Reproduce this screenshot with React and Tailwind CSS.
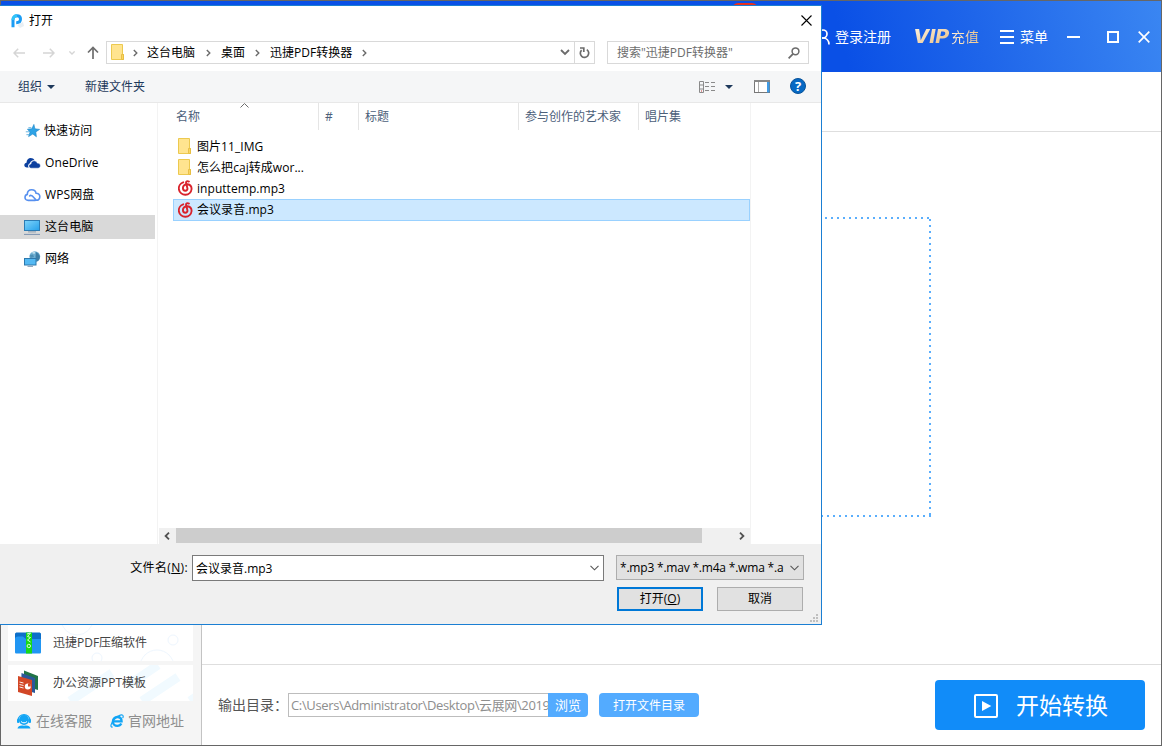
import React, { useState } from "react";

const FolderIcon = () => (
  <svg width="13" height="16" viewBox="0 0 13 16">
    <path d="M0.5 0.5H11.5V10L12.5 10.5V15.5H0.5Z" fill="#ffe48f" stroke="#ecc94f" />
    <path d="M10.5 15V10.5H12.5V15.5H10.5" fill="#fbd661" stroke="#e3b93c" strokeWidth="0.8" />
  </svg>
);

const MusicIcon = () => (
  <svg width="15" height="16" viewBox="0 0 15 16" fill="none" stroke="#d9232c" strokeLinecap="round">
    <path d="M5.2 2.3A6.4 6.4 0 1 0 13.6 9C13.6 6.3 11.9 4.5 9.5 4.2C6.8 4 4.9 5.8 4.9 8C4.9 9.6 6 10.7 7.3 10.7C8.9 10.7 9.7 9.4 9.4 8.2L8.1 3.1C7.8 1.5 9.3 0.6 10.9 1.6" strokeWidth="1.9" />
  </svg>
);

const StarIcon = () => (
  <svg width="16" height="16" viewBox="0 0 16 16">
    <path d="M9.9 1.4L10.9 5.8L15.6 6.4L11.8 8.9L12.4 13.8L8.8 11L4.6 13.6L6 9L3.4 6.2L7.8 5.8Z" fill="#2ea3e6" stroke="#1d86c8" strokeWidth="0.6" />
    <path d="M4.4 4.7H7.3M1.8 8.8H5.2M2.4 11.7H5" stroke="#5aaede" strokeWidth="0.9" />
  </svg>
);

const OneDriveIcon = () => (
  <svg width="17" height="16" viewBox="0 0 17 16">
    <path d="M3 12.6C1.2 12.6 0.3 11.4 0.3 10.1C0.3 8.8 1.3 7.9 2.5 7.7C2.5 4.8 4.6 3 6.7 3C8.4 3 9.8 3.9 10.5 5.3C8 5 6.3 6.5 6 8.2C4.4 8.5 3.5 10.8 4.7 12.6Z" fill="#0c409f" />
    <path d="M7.2 13.2C5.7 13.2 4.9 12.2 4.9 11.1C4.9 9.9 5.8 9 7 8.9C7.1 7 8.5 5.8 10.2 5.8C11.7 5.8 12.8 6.7 13.2 8.1C15 8 16.4 9.2 16.4 10.7C16.4 12.2 15.4 13.2 14 13.2Z" fill="#0c409f" stroke="#fff" strokeWidth="0.5" />
  </svg>
);

const WpsCloudIcon = () => (
  <svg width="17" height="16" viewBox="0 0 17 16" fill="none" stroke="#5790ef" strokeWidth="1.6" strokeLinecap="round">
    <path d="M11.2 13.4H4.2C2.2 13.4 1 12.1 1 10.4C1 8.8 2 7.7 3.3 7.4C3.3 4.4 5.2 2.7 7.7 2.7C10.1 2.7 11.8 4.2 12.1 6.3C14.2 6.4 15.8 7.8 15.8 9.8C15.8 11.8 14.4 13.4 12.4 13.3L8.6 9.2C7.7 8.2 6.3 8.2 5.6 9" />
  </svg>
);

const ComputerIcon = () => (
  <svg width="17" height="16" viewBox="0 0 17 16">
    <defs>
      <linearGradient id="screen" x1="0" y1="0" x2="1" y2="1">
        <stop offset="0" stopColor="#7fd4fb" />
        <stop offset="1" stopColor="#25a0ea" />
      </linearGradient>
    </defs>
    <rect x="0.5" y="1.5" width="15" height="10" fill="url(#screen)" stroke="#2c7cb4" />
    <path d="M4 12.9H12" stroke="#8b9cad" />
    <path d="M0 15.4H16" stroke="#7d93b0" />
  </svg>
);

const NetworkIcon = () => (
  <svg width="17" height="16" viewBox="0 0 17 16">
    <circle cx="10.8" cy="5.6" r="5.4" fill="#6fb0d3" />
    <path d="M12 1L14 2.5L15.8 5C16 8 15 9.6 12.8 10.6L11.5 6Z" fill="#3c7ea6" />
    <path d="M6 4L9 3.5L10 6L6.5 7Z" fill="#4c8fb5" />
    <path d="M7.5 1.8L11 0.8L10.5 3Z" fill="#cfe8f2" />
    <rect x="0.5" y="7.5" width="11.5" height="6.5" fill="#54b9f3" stroke="#2d78ad" />
    <path d="M3.5 15.3H9" stroke="#7895b0" />
  </svg>
);

const places = [
  { name: "快速访问", icon: StarIcon },
  { name: "OneDrive", icon: OneDriveIcon },
  { name: "WPS网盘", icon: WpsCloudIcon },
  { name: "这台电脑", icon: ComputerIcon },
  { name: "网络", icon: NetworkIcon },
];

const files = [
  { name: "图片11_IMG", icon: FolderIcon },
  { name: "怎么把caj转成wor...", icon: FolderIcon },
  { name: "inputtemp.mp3", icon: MusicIcon },
  { name: "会议录音.mp3", icon: MusicIcon },
];

const Chevron = () => (
  <svg width="5" height="8" viewBox="0 0 5 8" className="shrink-0">
    <path d="M0.8 1L3.8 4L0.8 7" fill="none" stroke="#6b6b6b" strokeWidth="1.4" />
  </svg>
);

function OpenDialog() {
  const [place, setPlace] = useState("这台电脑");
  const [selected, setSelected] = useState("会议录音.mp3");

  return (
    <div className="absolute left-0 top-[5px] w-[822px] h-[620px] flex flex-col bg-white border border-l-0 border-[#1b7fd3] text-xs text-black">
      {/* title bar */}
      <div className="h-[29px] flex items-center pl-[11px] pr-[9px] shrink-0">
        <svg width="13" height="14" viewBox="0 0 13 14">
          <path d="M6 11L12 8L13 12L9 14Z" fill="#e8eef3" />
          <path d="M2 13.3V5.8C2 3 3.8 1.8 6 1.8C8.3 1.8 9.5 3.1 9.5 5C9.5 7.4 8.2 8.7 5.2 8.7" fill="none" stroke="#1b9cf4" strokeWidth="3" />
          <path d="M2 6C2 3 3.8 1.8 6 1.8" fill="none" stroke="#31c4f8" strokeWidth="3" />
        </svg>
        <span className="ml-[5px]">打开</span>
        <svg className="ml-auto" width="11" height="11" viewBox="0 0 11 11">
          <path d="M0.5 0.5L10.5 10.5M10.5 0.5L0.5 10.5" stroke="#000" strokeWidth="1.1" />
        </svg>
      </div>

      {/* navigation */}
      <div className="h-9 pt-[6px] flex items-start shrink-0">
        <div className="h-[23px] w-[106px] flex items-center pl-[13px]">
          <svg width="12" height="10" viewBox="0 0 12 10" fill="none" stroke="#d5d5d5" strokeWidth="1.5">
            <path d="M12 5H1M5.2 0.8L1 5L5.2 9.2" />
          </svg>
          <svg className="ml-[18px]" width="12" height="10" viewBox="0 0 12 10" fill="none" stroke="#d5d5d5" strokeWidth="1.5">
            <path d="M0 5H11M6.8 0.8L11 5L6.8 9.2" />
          </svg>
          <svg className="ml-[14px]" width="6" height="4" viewBox="0 0 6 4" fill="none" stroke="#d5d5d5" strokeWidth="1.3">
            <path d="M0.4 0.4L3 3L5.6 0.4" />
          </svg>
          <svg className="ml-3" width="12" height="13" viewBox="0 0 12 13" fill="none" stroke="#6e6e6e" strokeWidth="1.7">
            <path d="M6 13V1.5M1 6.5L6 1.5L11 6.5" />
          </svg>
        </div>
        <div className="w-[489px] h-[23px] border border-[#d9d9d9] flex items-center">
          <span className="ml-1 pb-px shrink-0"><FolderIcon /></span>
          <div className="flex items-center gap-[10px] ml-[9px]">
            <Chevron />
            <span className="-ml-px mr-px">这台电脑</span>
            <Chevron />
            <span>桌面</span>
            <Chevron />
            <span>迅捷PDF转换器</span>
            <Chevron />
          </div>
          <svg className="ml-auto mr-1" width="10" height="7" viewBox="0 0 10 7" fill="none" stroke="#6b6b6b" strokeWidth="1.8">
            <path d="M1 1L5 5L9 1" />
          </svg>
          <div className="w-5 h-full border-l border-[#d9d9d9] flex items-center justify-center">
            <svg width="11" height="12" viewBox="0 0 11 12" fill="none" stroke="#6b6b6b" strokeWidth="1.7">
              <path d="M7.8 2.6A4.2 4.2 0 1 1 2.6 3.1" />
              <path d="M1 1H4.8V5" />
            </svg>
          </div>
        </div>
        <div className="ml-3 w-[202px] h-[23px] border border-[#d9d9d9] flex items-center pl-[9px] pr-2 text-[#6d6d6d]">
          <span>搜索"迅捷PDF转换器"</span>
          <svg className="ml-auto" width="12" height="12" viewBox="0 0 12 12" fill="none" stroke="#6b6b6b" strokeWidth="1.5">
            <circle cx="7.5" cy="4.3" r="3.4" />
            <path d="M5 6.8L0.6 11.3" strokeWidth="1.8" />
          </svg>
        </div>
      </div>

      {/* command bar */}
      <div className="h-8 bg-[#f5f6f7] border-b border-[#e8e8e8] flex items-center pl-[18px] text-[#1e395b] shrink-0">
        <span>组织</span>
        <svg className="ml-[5px]" width="8" height="4" viewBox="0 0 8 4"><path d="M0 0H8L4 4Z" fill="#1e395b" /></svg>
        <span className="ml-[30px]">新建文件夹</span>
        <svg className="ml-auto" width="16" height="12" viewBox="0 0 16 12" fill="none" stroke="#8a8a8a">
          <path d="M0.5 0.5H4.5V11.5H0.5ZM0.5 4H4.5M0.5 8H4.5M6 1.5H10M12 1.5H16M6 5.5H10M12 5.5H16M6 9.5H10M12 9.5H16" />
          <path d="M2 10H3" stroke="#c33" />
        </svg>
        <svg className="ml-[10px]" width="8" height="4" viewBox="0 0 8 4"><path d="M0 0H8L4 4Z" fill="#1e395b" /></svg>
        <svg className="ml-[21px]" width="16" height="13" viewBox="0 0 16 13">
          <rect x="0.5" y="0.5" width="15" height="12" fill="#fff" stroke="#777" />
          <path d="M0 1H16" stroke="#888" strokeWidth="2" />
          <path d="M4.5 2V12" stroke="#aaa" />
          <rect x="13" y="2" width="2.5" height="10.5" fill="#3f9be6" />
        </svg>
        <span className="ml-5 mr-[15px] mb-px size-4 rounded-full bg-[#0669c4] border border-[#09539a] text-white font-bold text-[13px] leading-none flex items-center justify-center">?</span>
      </div>

      {/* folder tree and file list */}
      <div className="flex h-[441px] shrink-0">
        <div className="w-[158px] pt-4 border-r border-[#f3f3f3] flex flex-col gap-2">
          {places.map(({ name, icon: Icon }) => (
            <div
              key={name}
              onClick={() => setPlace(name)}
              className={`h-6 w-[155px] pl-6 flex items-center gap-1 ${place === name ? "bg-[#d9d9d9]" : ""}`}
            >
              <Icon />
              <span className="tracking-[0.1px]">{name}</span>
            </div>
          ))}
        </div>

        <div className="w-[592px] pl-[1px] flex flex-col">
          <div className="h-[27px] flex text-[#4c607a] leading-[27px]">
            <div className="relative w-[160px] pl-[17px] border-r border-[#e5e5e5]">
              名称
              <svg className="absolute left-[81px] top-0" width="9" height="5" viewBox="0 0 9 5" fill="none" stroke="#6b6b6b">
                <path d="M0.5 4.5L4.5 0.5L8.5 4.5" />
              </svg>
            </div>
            <div className="w-10 pl-[6px] border-r border-[#e5e5e5]">#</div>
            <div className="w-[160px] pl-[6px] border-r border-[#e5e5e5]">标题</div>
            <div className="w-[120px] pl-[6px] border-r border-[#e5e5e5]">参与创作的艺术家</div>
            <div className="w-[111px] pl-[6px]">唱片集</div>
          </div>
          <div className="flex-1 pt-[5px] pl-[14px]">
            {files.map(({ name, icon: Icon }) => (
              <div
                key={name}
                onClick={() => setSelected(name)}
                className={`h-[22px] mb-[-0.8px] w-[577px] flex items-center border ${selected === name ? "bg-[#cce8ff] border-[#99d1ff]" : "border-transparent"}`}
              >
                <span className="w-[23px] pl-[4px] shrink-0"><Icon /></span>
                <span className="tracking-[0.05px] pt-px">{name}</span>
              </div>
            ))}
          </div>
          <div className="h-4 bg-[#f0f0f0] flex items-start">
            <div className="w-[17px] h-[15px] pr-px flex items-center justify-center">
              <svg width="6" height="8" viewBox="0 0 6 8" fill="none" stroke="#505050" strokeWidth="1.8"><path d="M5 0.7L1.6 4L5 7.3" /></svg>
            </div>
            <div className="w-[526px] h-[15px] bg-[#cdcdcd]" />
            <div className="ml-auto w-[17px] h-[15px] flex items-center justify-center">
              <svg width="6" height="8" viewBox="0 0 6 8" fill="none" stroke="#505050" strokeWidth="1.8"><path d="M1 0.7L4.4 4L1 7.3" /></svg>
            </div>
          </div>
        </div>
        <div className="w-px bg-[#f3f3f3]" />
      </div>

      {/* file name and buttons */}
      <div className="flex-1 bg-[#f0f0f0] relative pt-[11px] flex flex-col">
        <div className="flex items-start h-8">
          <span className="w-[192px] pr-[4px] text-right leading-[26px] tracking-[0.35px]">文件名(<u>N</u>):</span>
          <div className="w-[412px] h-[26px] bg-white border border-[#7a7a7a] flex items-center pl-[3px] pr-1">
            <span className="pt-px">{selected}</span>
            <svg className="ml-auto" width="9" height="6" viewBox="0 0 9 6" fill="none" stroke="#555" strokeWidth="1.1"><path d="M0.5 0.8L4.5 4.8L8.5 0.8" /></svg>
          </div>
          <div className="ml-3 w-[188px] h-[25px] bg-[#e1e1e1] border border-[#adadad] flex items-center pl-[3px] pr-1">
            <span className="whitespace-nowrap tracking-[-0.2px]">*.mp3 *.mav *.m4a *.wma *.a</span>
            <svg className="ml-auto" width="9" height="6" viewBox="0 0 9 6" fill="none" stroke="#555" strokeWidth="1.1"><path d="M0.5 0.8L4.5 4.8L8.5 0.8" /></svg>
          </div>
        </div>
        <div className="flex gap-[14px] pl-[617px]">
          <button className="w-[86px] h-6 bg-[#e1e1e1] border-2 border-[#0078d7]">打开(<u>O</u>)</button>
          <button className="w-[86px] h-6 bg-[#e1e1e1] border border-[#adadad]">取消</button>
        </div>
        <svg className="absolute right-[2px] bottom-[1px]" width="9" height="9" viewBox="0 0 9 9" fill="#bfbfbf">
          <path d="M6 0h2v2h-2zM3 3h2v2h-2zM6 3h2v2h-2zM0 6h2v2h-2zM3 6h2v2h-2zM6 6h2v2h-2z" />
        </svg>
      </div>
    </div>
  );
}

function Header() {
  return (
    <header className="h-[71px] shrink-0 flex items-center justify-end text-white text-sm bg-[linear-gradient(75deg,#0a50e6_0%,#0a50e6_72%,#1f66ea_84%,#3a86f2_100%)]">
      <svg width="14" height="16" viewBox="0 0 14 16" fill="none" stroke="#fff" strokeWidth="1.7">
        <circle cx="7" cy="5" r="4" />
        <path d="M1 15.5C1 11.5 3.5 9 7 9C10.5 9 13 11.5 13 15.5" />
      </svg>
      <span className="ml-[5px]">登录注册</span>
      <span className="ml-[22px] w-[37px] flex">
        <span className="origin-left scale-x-[1.14] pr-[2px] font-['Inter'] font-extrabold italic text-[18.5px] leading-none bg-gradient-to-br from-[#fff5e3] to-[#e5b878] bg-clip-text text-transparent">VIP</span>
      </span>
      <span className="ml-[1px] bg-gradient-to-r from-[#fff0da] to-[#f0c78c] bg-clip-text text-transparent">充值</span>
      <svg className="ml-[21px]" width="14" height="14" viewBox="0 0 14 14" stroke="#fff" strokeWidth="2"><path d="M0 1H14M0 7H14M0 13H14" /></svg>
      <span className="ml-[6px]">菜单</span>
      <svg className="ml-[19px]" width="13" height="2" viewBox="0 0 13 2"><path d="M0 1H13" stroke="#fff" strokeWidth="2" /></svg>
      <svg className="ml-[27px]" width="12" height="12" viewBox="0 0 12 12" fill="none" stroke="#fff" strokeWidth="2"><rect x="1" y="1" width="10" height="10" /></svg>
      <svg className="ml-[19px] mr-[11px]" width="12" height="12" viewBox="0 0 12 12" stroke="#fff" strokeWidth="1.7"><path d="M0.7 0.7L11.3 11.3M11.3 0.7L0.7 11.3" /></svg>
    </header>
  );
}

function Promo({ icon, children, art }) {
  return (
    <div className="relative h-9 w-[185px] bg-white flex items-center overflow-hidden text-[#444]">
      {art}
      <span className="relative w-[45px] pl-[6px] shrink-0">{icon}</span>
      <span className="relative">{children}</span>
    </div>
  );
}

const ZipIcon = () => (
  <svg width="28" height="22" viewBox="0 0 28 22">
    <path d="M1 2C1 1 2 0.5 3 0.5H25C26 0.5 27 1 27 2V9H1Z" fill="#0d6fc9" />
    <path d="M1 7C1 5.5 2 4.5 4 4.5H9L12 7H27V20C27 21 26.5 21.5 25.5 21.5H2.5C1.5 21.5 1 21 1 20Z" fill="#2196f3" />
    <rect x="12" y="0.5" width="6" height="21" fill="#18d818" />
    <path d="M13 2L16.5 1L13.5 4.5L16.5 5.5L13.5 8L16.5 10" fill="none" stroke="#d5ffd5" />
    <circle cx="14.8" cy="14" r="1.7" fill="none" stroke="#d5ffd5" />
  </svg>
);

const PptIcon = () => (
  <svg width="26" height="26" viewBox="0 0 26 26">
    <path d="M10 0.5L24 6V20L10 16Z" fill="#217346" />
    <path d="M7.5 3L21 8V23L7 19Z" fill="#2b579a" />
    <path d="M4 6L18 10V26L4 22Z" fill="#d24726" />
    <path d="M5.5 12L9.5 13M5.5 14.5L9.5 15.5M5.5 17L9.5 18" stroke="#fff" strokeWidth="0.9" />
    <circle cx="13.8" cy="16.6" r="3" fill="#fff" />
    <path d="M14 16.4V13.4A3 3 0 0 1 16.8 16.4Z" fill="#d24726" />
  </svg>
);

function MainWindow() {
  return (
    <div className="relative h-full flex flex-col overflow-hidden bg-white border border-[#666]">
      <Header />

      <div className="flex flex-1 min-h-0">
        <aside className="w-[201px] bg-[#f5f5f5] border-r border-[#c3c3c3] flex flex-col justify-end pl-[7px] gap-1 text-xs">
          <Promo
            icon={<ZipIcon />}
            art={
              <svg className="absolute inset-0" width="185" height="36" fill="none" stroke="#eef6fe">
                <circle cx="69" cy="-6" r="16" />
                <circle cx="165" cy="15" r="5" />
                <circle cx="89" cy="33" r="5" />
                <circle cx="149" cy="42" r="17" />
              </svg>
            }
          >
            迅捷PDF压缩软件
          </Promo>
          <Promo
            icon={<PptIcon />}
            art={
              <svg className="absolute inset-0" width="185" height="36" stroke="#f1faff">
                <path d="M62 36L104 8M119 21L150 0M134 36L170 12M182 36L200 24" strokeWidth="9" />
              </svg>
            }
          >
            办公资源PPT模板
          </Promo>
          <div className="h-10 pb-2 flex items-center text-sm text-[#8e8e8e]">
            <svg className="ml-[9px]" width="14" height="15" viewBox="0 0 14 15">
              <circle cx="7" cy="6" r="5" fill="#12a5f5" />
              <path d="M1 6.5C1 -1.2 13 -1.2 13 6.5" fill="none" stroke="#12a5f5" strokeWidth="1.3" />
              <rect x="0" y="5" width="2.4" height="4" rx="1" fill="#12a5f5" />
              <rect x="11.6" y="5" width="2.4" height="4" rx="1" fill="#12a5f5" />
              <path d="M4 7.5C5.5 9.3 8.5 9.3 10 7.5" fill="none" stroke="#fff" />
              <path d="M0.5 14.5C1 12 3.5 11 7 11.8C10.5 11 13 12 13.5 14.5Z" fill="#12a5f5" />
            </svg>
            <span className="ml-[5px]">在线客服</span>
            <svg className="ml-[18px]" width="14" height="14" viewBox="0 0 14 14" fill="none" stroke="#12a5f5">
              <path d="M3 7.4H11.6C11.6 4.6 9.8 3 7.3 3C4.8 3 2.9 4.8 2.9 7.4C2.9 10 4.8 11.8 7.3 11.8C9.2 11.8 10.6 11 11.3 9.6" strokeWidth="2.3" />
              <path d="M2.6 12.9C0 13.8 0.3 9.6 4.4 5.3C8.4 1 13 -0.4 13.2 2.2C13.2 2.8 13 3.4 12.7 4" strokeWidth="1.2" />
            </svg>
            <span className="ml-1">官网地址</span>
          </div>
        </aside>

        <main className="flex-1 flex flex-col min-w-0">
          <div className="h-[60px] shrink-0 border-b border-[#dedede]" />
          {/* drop area */}
          <div className="flex-1 flex justify-end pt-[85px] pr-[230px]">
            <svg width="498" height="300" viewBox="0 0 498 300" fill="none" stroke="#5aaefc" strokeWidth="2" strokeDasharray="2 4">
              <path d="M496 1H0" />
              <path d="M497 2V300" />
              <path d="M498 299H0" />
            </svg>
          </div>
          <div className="h-[81px] shrink-0 border-t border-[#dedede] flex items-center pl-4 pr-4">
            <span className="text-sm text-[#555] w-[70px] whitespace-nowrap">输出目录：</span>
            <div className="w-[260px] h-6 border border-[#bdbdbd] border-r-0 overflow-hidden whitespace-nowrap text-[13px] tracking-[-0.36px] leading-[22px] pl-[2px] text-[#8e8e8e]">
              C:\Users\Administrator\Desktop\云展网\2019
            </div>
            <button className="w-10 h-6 bg-[#53abff] rounded-r-sm text-white text-[13px] leading-none">浏览</button>
            <button className="ml-[11px] w-[100px] h-6 bg-[#53abff] rounded-sm text-white text-xs pt-px">打开文件目录</button>
            <button className="ml-auto w-[210px] h-[50px] bg-[#118cf9] rounded-sm text-white text-[23px] flex items-center pl-[39px]">
              <svg width="24" height="24" viewBox="0 0 24 24" className="mt-px">
                <rect x="1" y="1" width="22" height="22" rx="1" fill="none" stroke="#fff" strokeWidth="2" />
                <path d="M8 7L17.3 12L8 17Z" fill="#fff" />
              </svg>
              <span className="ml-[18px]">开始转换</span>
            </button>
          </div>
        </main>
      </div>

      {/* badge of the tab under the dialog */}
      <div className="absolute left-[731px] top-[2px] w-[26px] h-4 rounded-md bg-[#e8301c]" />
    </div>
  );
}

function App() {
  return (
    <div className="relative w-[1162px] h-[746px] overflow-hidden font-['Open_Sans','Noto_Sans_CJK_SC',sans-serif]">
      <MainWindow />
      <OpenDialog />
    </div>
  );
}

export default App;
